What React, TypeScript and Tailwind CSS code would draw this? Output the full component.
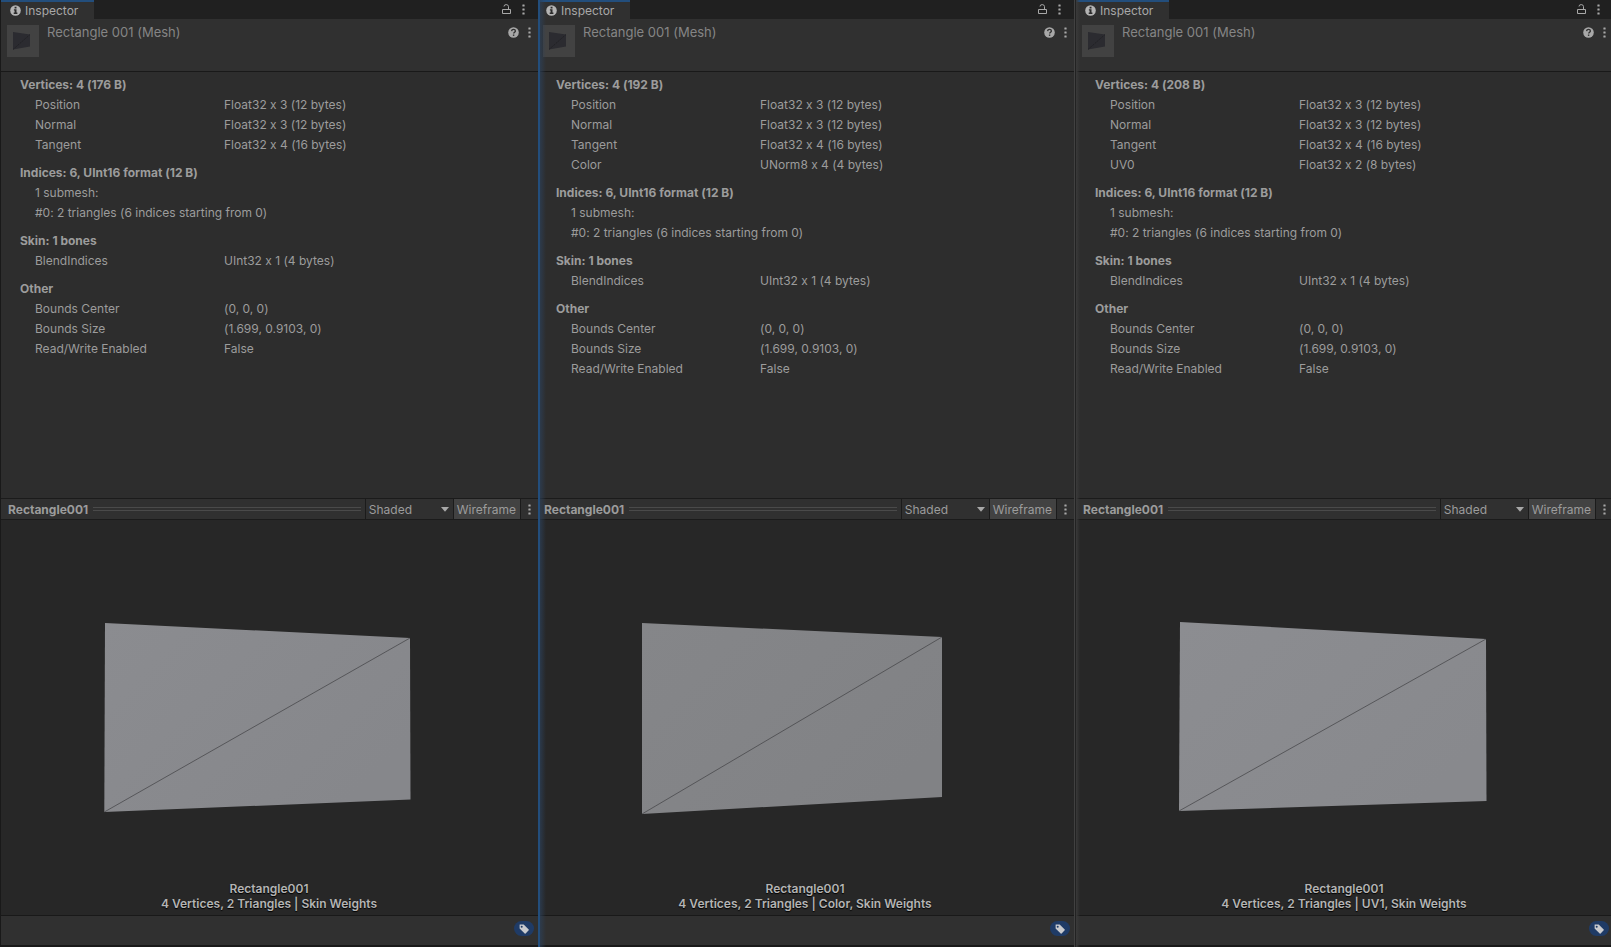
import React from "react";

type Attribute = [label: string, value?: string];
type Section = { title: string; rows: Attribute[] };
type Point = [x: number, y: number];
type Edge = "plain" | "focused" | "divider";

type PanelData = {
  id: string;
  edge: Edge;
  size: string;
  extra: Attribute[];
  caption: string;
  corners: [Point, Point, Point, Point];
  light: string;
  dark: string;
};

const panels: PanelData[] = [
  {
    id: "base",
    edge: "plain",
    size: "176 B",
    extra: [],
    caption: "4 Vertices, 2 Triangles | Skin Weights",
    corners: [[105, 103], [410, 118], [410.5, 279.5], [104.3, 292]],
    light: "#8b8c90",
    dark: "#86878b",
  },
  {
    id: "color",
    edge: "focused",
    size: "192 B",
    extra: [["Color", "UNorm8 x 4 (4 bytes)"]],
    caption: "4 Vertices, 2 Triangles | Color, Skin Weights",
    corners: [[106, 103], [406, 117], [406, 277], [106, 294]],
    light: "#858689",
    dark: "#818285",
  },
  {
    id: "uv",
    edge: "divider",
    size: "208 B",
    extra: [["UV0", "Float32 x 2 (8 bytes)"]],
    caption: "4 Vertices, 2 Triangles | UV1, Skin Weights",
    corners: [[105, 102], [411, 119], [411.5, 281], [104, 291]],
    light: "#8c8d91",
    dark: "#88898d",
  },
];

function sectionsFor(panel: PanelData): Section[] {
  return [
    {
      title: `Vertices: 4 (${panel.size})`,
      rows: [
        ["Position", "Float32 x 3 (12 bytes)"],
        ["Normal", "Float32 x 3 (12 bytes)"],
        ["Tangent", "Float32 x 4 (16 bytes)"],
        ...panel.extra,
      ],
    },
    {
      title: "Indices: 6, UInt16 format (12 B)",
      rows: [["1 submesh:"], ["#0: 2 triangles (6 indices starting from 0)"]],
    },
    { title: "Skin: 1 bones", rows: [["BlendIndices", "UInt32 x 1 (4 bytes)"]] },
    {
      title: "Other",
      rows: [
        ["Bounds Center", "(0, 0, 0)"],
        ["Bounds Size", "(1.699, 0.9103, 0)"],
        ["Read/Write Enabled", "False"],
      ],
    },
  ];
}

function InfoIcon() {
  return (
    <svg width="11" height="11" viewBox="0 0 11 11" aria-hidden="true">
      <circle cx="5.5" cy="5.5" r="5.3" fill="#b4b4b4" />
      <path d="M4.6 1.8h1.9v1.6H4.6zM3.9 4.3h2.6v3.3h.9v1.3H3.7V7.6h.9v-2h-.7z" fill="#2b2b2b" />
    </svg>
  );
}

function LockIcon() {
  return (
    <svg width="9" height="11" viewBox="0 0 9 11" fill="none" stroke="#a8a8a8" aria-hidden="true">
      <path d="M.5 5.5h8v4h-8z" />
      <path d="M2 2.5Q2 .6 4.2.6T6.5 2.6v2.9" />
    </svg>
  );
}

function KebabIcon() {
  return (
    <svg width="3" height="11" viewBox="0 0 3 11" fill="#a8a8a8" aria-hidden="true">
      <rect x=".4" y=".4" width="2.2" height="2.2" rx=".4" />
      <rect x=".4" y="4.4" width="2.2" height="2.2" rx=".4" />
      <rect x=".4" y="8.4" width="2.2" height="2.2" rx=".4" />
    </svg>
  );
}

function HelpIcon() {
  return (
    <svg width="11" height="11" viewBox="0 0 11 11" aria-hidden="true">
      <circle cx="5.5" cy="5.5" r="5.3" fill="#a8a8a8" />
      <path d="M3.6 4.1c.1-1.1.9-1.7 1.9-1.7 1.1 0 1.9.6 1.9 1.6 0 1.2-1.6 1.3-1.7 2.5" fill="none" stroke="#303030" strokeWidth="1.3" />
      <rect x="4.9" y="7.5" width="1.4" height="1.4" fill="#303030" />
    </svg>
  );
}

function TagIcon() {
  return (
    <svg width="10" height="10" viewBox="0 0 10 10" aria-hidden="true">
      <path fillRule="evenodd" d="M.8.6h3.9L9.7 5.4c.3.3.3.6 0 .9L6.6 9.4c-.3.3-.6.3-.9 0L.6 4.5V.8zM2.7 1.7a1 1 0 1 0 0 2 1 1 0 0 0 0-2z" fill="#c8cace" />
    </svg>
  );
}

function MeshThumb() {
  return (
    <svg width="32" height="32" viewBox="0 0 32 32" className="shrink-0 bg-[#424242]" aria-hidden="true">
      <path d="M6 7l17 2.5v12L6 24.5z" fill="#2b2b30" />
      <path d="M6 24.5L23 9.5" stroke="#1d1d20" strokeWidth=".7" strokeDasharray="2 1" />
    </svg>
  );
}

function MeshView({ panel }: { panel: PanelData }) {
  const [, topRight, , bottomLeft] = panel.corners;
  const gradient = `shade-${panel.id}`;
  return (
    <svg viewBox="0 0 538 395" className="col-start-1 row-start-1 h-full min-h-0 w-full" role="img" aria-label="Mesh preview">
      <defs>
        <linearGradient id={gradient} x1="0" y1="0" x2="1" y2=".6">
          <stop offset="0" stopColor={panel.light} />
          <stop offset="1" stopColor={panel.dark} />
        </linearGradient>
      </defs>
      <polygon points={panel.corners.map((p) => p.join(",")).join(" ")} fill={`url(#${gradient})`} />
      <line x1={bottomLeft[0]} y1={bottomLeft[1]} x2={topRight[0]} y2={topRight[1]} stroke="#414144" strokeWidth=".7" />
    </svg>
  );
}

const insets: Record<Edge, string> = {
  plain: "",
  focused: "-ml-0.5",
  divider: "ml-px -mr-0.5",
};

function PanelEdge({ edge }: { edge: Edge }) {
  if (edge === "focused") {
    return (
      <div className="pointer-events-none absolute inset-y-0 left-0 flex">
        <div className="w-0.5 bg-[#234e7c]" />
        <div className="w-1.5 bg-linear-to-r from-[#2c4059]/70 to-transparent" />
      </div>
    );
  }
  if (edge === "divider") {
    return (
      <div className="pointer-events-none absolute inset-y-0 left-0 flex">
        <div className="w-px bg-[#414141]" />
        <div className="w-px bg-[#222222]" />
        <div className="w-1 bg-linear-to-r from-[#3a3a3a] to-transparent" />
      </div>
    );
  }
  return <div className="pointer-events-none absolute inset-y-0 left-0 w-px bg-[#191919]" />;
}

function InspectorPanel({ panel }: { panel: PanelData }) {
  return (
    <section className="relative flex min-w-0 flex-col overflow-hidden">
      <div className={`flex min-h-0 flex-1 flex-col ${insets[panel.edge]}`}>
        <div className="flex h-[19px] shrink-0 items-center justify-between bg-[#202020] pr-[13px]">
          <button type="button" className="flex h-full items-center gap-1 border-t-2 border-[#234e7c] bg-[#303030] pr-4 pl-[10px] text-[12px] text-[#a8a8a8]">
            <InfoIcon />
            Inspector
          </button>
          <div className="flex items-center gap-[11px]">
            <button type="button" aria-label="Lock"><LockIcon /></button>
            <button type="button" aria-label="Tab options"><KebabIcon /></button>
          </div>
        </div>

        <header className="flex h-[53px] shrink-0 items-start border-b border-[#191919] bg-[#303030] px-[7px] pt-[6px]">
          <MeshThumb />
          <h1 className="ml-2 text-[13px] leading-[15px] text-[#858585]">Rectangle 001 (Mesh)</h1>
          <div className="ml-auto flex items-center gap-[9px] pt-[2px]">
            <button type="button" aria-label="Help"><HelpIcon /></button>
            <button type="button" aria-label="Mesh options"><KebabIcon /></button>
          </div>
        </header>

        <div className="min-h-0 flex-[426] overflow-hidden bg-[#2d2d2d]">
          <div className="flex flex-col gap-2 pt-[3px] pl-5">
            {sectionsFor(panel).map((section) => (
              <div key={section.title} className="text-[12px] leading-5">
                <h2 className="font-bold text-[#9c9c9c]">{section.title}</h2>
                <dl className="pl-[15px] text-[#9c9c9c]">
                  {section.rows.map(([label, value]) => (
                    <div key={label} className="flex">
                      <dt className={value ? "w-[189px]" : ""}>{label}</dt>
                      {value && <dd>{value}</dd>}
                    </div>
                  ))}
                </dl>
              </div>
            ))}
          </div>
        </div>

        <div className="flex h-[22px] shrink-0 items-stretch border-y border-[#1b1b1b] bg-[#303030] text-[12px] text-[#9c9c9c]">
          <h2 className="flex items-center pt-0.5 pl-2 font-bold">Rectangle001</h2>
          <div className="my-auto mr-1 ml-[5px] h-1 flex-1 border-y border-[#4a4a4a]" />
          <div className="relative flex border-l border-[#1b1b1b]">
            <select aria-label="Shading mode" className="w-[87px] appearance-none bg-transparent pt-0.5 pl-[3px]">
              <option>Shaded</option>
            </select>
            <svg width="8" height="5" viewBox="0 0 8 5" className="pointer-events-none absolute top-2 right-1" aria-hidden="true">
              <path d="M0 0h8L4 4.8z" fill="#a8a8a8" />
            </svg>
          </div>
          <button type="button" aria-pressed="true" className="border-x border-[#1b1b1b] bg-[#424242] px-[3px] pt-0.5 pr-1">Wireframe</button>
          <button type="button" aria-label="Preview options" className="flex items-center px-[7px]"><KebabIcon /></button>
        </div>

        <div className="grid min-h-0 flex-[395] grid-cols-1 grid-rows-1 overflow-hidden bg-[#272727]">
          <MeshView panel={panel} />
          <div className="z-10 col-start-1 row-start-1 self-end pb-1 text-center text-[12px] leading-[15px] font-semibold text-[#b4b4b4] [text-shadow:0_1px_1px_#000]">
            <p>Rectangle001</p>
            <p>{panel.caption}</p>
          </div>
        </div>

        <footer className="flex h-8 shrink-0 items-start justify-end border-t border-b-2 border-t-[#191919] border-b-[#191919] bg-[#303030] pt-[5px] pr-1">
          <button type="button" aria-label="Asset labels" className="flex h-[15px] w-5 items-center justify-center rounded-full bg-[#1f3b66]">
            <TagIcon />
          </button>
        </footer>
      </div>
      <PanelEdge edge={panel.edge} />
    </section>
  );
}

export default function App() {
  return (
    <main className="grid h-screen grid-cols-[538fr_536fr_537fr] grid-rows-1 overflow-hidden bg-[#2d2d2d] font-['Inter',sans-serif] [font-feature-settings:'calt'_0]">
      {panels.map((panel) => (
        <InspectorPanel key={panel.id} panel={panel} />
      ))}
    </main>
  );
}
